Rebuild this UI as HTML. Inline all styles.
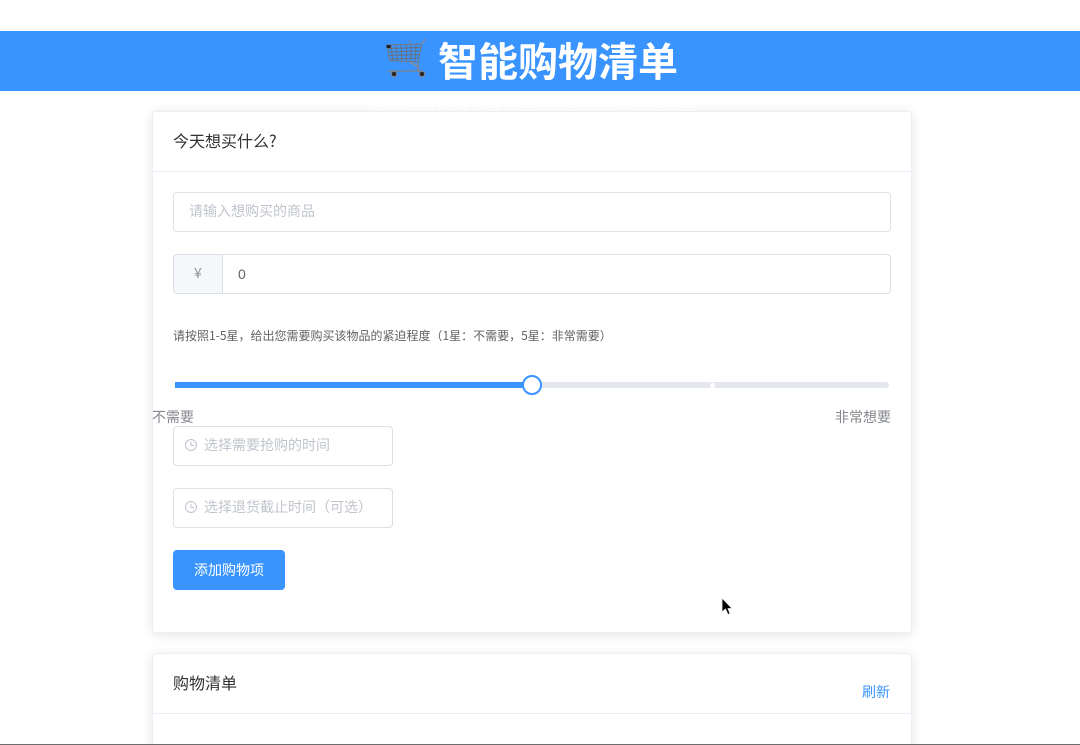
<!DOCTYPE html>
<html lang="zh-CN">
<head>
<meta charset="utf-8">
<title>智能购物清单</title>
<style>
html,body{margin:0;padding:0;background:#fff;width:1080px;height:745px;overflow:hidden;}
#w{width:1080px;height:745px;position:relative;overflow:hidden;font-family:"Liberation Sans","Noto Sans CJK SC",sans-serif;font-weight:400;}
.a{position:absolute;white-space:nowrap;}
.hdr{left:0;top:31px;width:1080px;height:60px;background:#3a94ff;}
.title{left:438px;top:31px;height:60px;line-height:56px;font-size:40px;font-weight:700;color:#fff;font-family:"Noto Sans CJK SC",sans-serif;}
.sub{left:372px;top:98px;height:13px;overflow:hidden;font-size:16px;line-height:20px;color:#fdfdfe;font-family:"Noto Sans CJK SC",sans-serif;}
.card{left:152px;width:758px;background:#fff;border:1px solid #ebeef5;border-radius:4px;box-shadow:0 2px 12px rgba(0,0,0,.1);box-sizing:content-box;}
.line{left:153px;width:758px;height:1px;background:#ebeef5;}
.box{box-sizing:border-box;border:1px solid #dcdfe6;border-radius:4px;background:#fff;height:40px;}
.t{font-family:"Noto Sans CJK SC",sans-serif;}
.ph{color:#c0c4cc;font-size:14px;line-height:38px;}
</style>
</head>
<body>
<div id="w">
<div class="a hdr"></div>
<svg class="a" style="left:384px;top:38px" width="44" height="42" viewBox="0 0 44 42" fill="none">
<g stroke="#6a6e74" stroke-width=".9">
<path d="M3 10.500L37 9.500M4 14L36.500 13M4.500 17.500L36 16.500M5 21L35 20"/>
<path d="M7 7L9 22.500M12 7L13.500 23M17 7L18 23.500M22 6.500L22.500 24M27 6.500L27 24M32 6.500L31 24"/>
</g>
<path d="M3 7L37.700 6L34 24L6 22.500Z" stroke="#74787e" stroke-width="1"/>
<path d="M37.700 6L41.500 1" stroke="#8a8e94" stroke-width="1.100"/>
<path d="M26 24L33 28L35 33" stroke="#8c9096" stroke-width="1.400"/>
<path d="M34 24V33M4 33H38" stroke="#7e8288" stroke-width="1.300"/>
<path d="M25 1.500L26.500 7" stroke="#7e8288"/>
<rect x="2.500" y="7" width="4" height="3" fill="#1d1f22"/>
<circle cx="10" cy="36" r="2.800" fill="#26282a" stroke="#85898e"/>
<circle cx="38" cy="36" r="2.800" fill="#26282a" stroke="#85898e"/>
</svg>
<div class="a title">智能购物清单</div>

<div class="a card" style="top:111px;height:520px"></div>
<div class="a sub">SpringBoot + Vue.js 智能购物决策与提醒应用</div>
<div class="a line" style="top:171px"></div>
<div class="a t" style="left:173px;top:129px;font-size:16px;line-height:22px;color:#303133">今天想买什么?</div>

<div class="a box" style="left:173px;top:192px;width:718px"></div>
<div class="a t ph" style="left:189px;top:192px">请输入想购买的商品</div>

<div class="a box" style="left:173px;top:254px;width:718px"></div>
<div class="a" style="left:174px;top:255px;width:48px;height:38px;background:#f5f7fa;border-right:1px solid #dcdfe6;border-radius:3px 0 0 3px"></div>
<div class="a t" style="left:194px;top:255px;font-size:14px;line-height:36px;color:#909399">¥</div>
<div class="a" style="left:238px;top:255px;font-size:14px;line-height:38px;color:#606266">0</div>

<div class="a t" style="left:173px;top:327px;font-size:12px;line-height:18px;color:#606266">请按照1-5星，给出您需要购买该物品的紧迫程度（1星：不需要，5星：非常需要）</div>

<div class="a" style="left:175px;top:382px;width:714px;height:6px;background:#e4e7ed;border-radius:3px"></div>
<div class="a" style="left:175px;top:382px;width:357px;height:6px;background:#3a94ff"></div>
<div class="a" style="left:709.500px;top:382.500px;width:5px;height:5px;background:#fff;border-radius:50%"></div>
<div class="a" style="left:522px;top:375px;width:20px;height:20px;box-sizing:border-box;background:#fff;border:2px solid #3a94ff;border-radius:50%"></div>

<div class="a t" style="left:152px;top:407px;font-size:14px;line-height:20px;color:#85888e">不需要</div>
<div class="a t" style="left:835px;top:407px;font-size:14px;line-height:20px;color:#85888e">非常想要</div>

<div class="a box" style="left:173px;top:426px;width:220px"></div>
<svg class="a" style="left:184px;top:438px" width="14" height="14" viewBox="0 0 14 14" fill="none" stroke="#c0c4cc"><circle cx="7" cy="7" r="5.500"/><path d="M7 3.500V7.500H10"/></svg>
<div class="a t ph" style="left:204px;top:426px">选择需要抢购的时间</div>

<div class="a box" style="left:173px;top:488px;width:220px"></div>
<svg class="a" style="left:184px;top:500px" width="14" height="14" viewBox="0 0 14 14" fill="none" stroke="#c0c4cc"><circle cx="7" cy="7" r="5.500"/><path d="M7 3.500V7.500H10"/></svg>
<div class="a t ph" style="left:204px;top:488px">选择退货截止时间（可选）</div>

<div class="a t" style="left:173px;top:550px;width:112px;height:40px;background:#3a94ff;border-radius:4px;color:#fff;font-size:14px;line-height:40px;text-align:center">添加购物项</div>

<svg class="a" style="left:720px;top:596px" width="16" height="22" viewBox="0 0 16 22"><path d="M2 2V16L5.500 13L8 18.500L10 17.500L8 12.500H12Z" fill="#000" stroke="#f4f4f4" stroke-width=".8"/></svg>

<div class="a card" style="top:653px;height:120px"></div>
<div class="a line" style="top:713px"></div>
<div class="a t" style="left:173px;top:671px;font-size:16px;line-height:22px;color:#303133">购物清单</div>
<div class="a t" style="left:862px;top:682px;font-size:14px;line-height:20px;color:#3a94ff">刷新</div>

<div class="a" style="left:0;top:744px;width:1080px;height:1px;background:#6d6d6d"></div>
</div>
</body>
</html>
